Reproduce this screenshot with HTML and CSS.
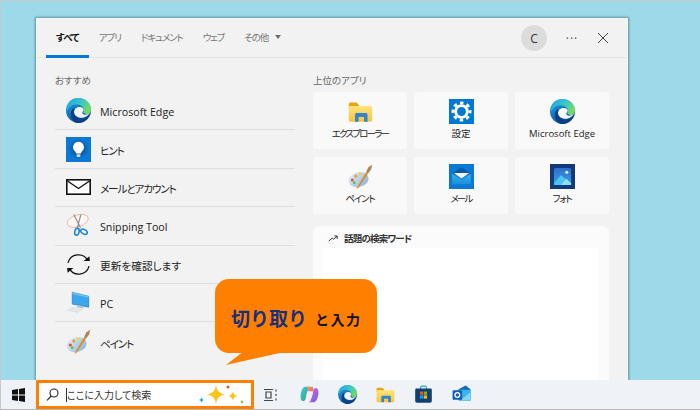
FILE: index.html
```html
<!DOCTYPE html>
<html lang="ja">
<head>
<meta charset="utf-8">
<title>検索</title>
<link rel="stylesheet" href="styles.css">
</head>
<body>
<svg class="sprite" aria-hidden="true">
  <defs>
    <linearGradient id="edgeBase" x1="0" y1="0" x2="0.6" y2="1"><stop offset="0" stop-color="#1fa2e4"/><stop offset="1" stop-color="#0a4f9e"/></linearGradient>
    <linearGradient id="edgeTop" x1="0" y1="0.2" x2="1" y2="0.6"><stop offset="0" stop-color="#22a7e8"/><stop offset="0.55" stop-color="#3cc8c4"/><stop offset="1" stop-color="#78dc58"/></linearGradient>
    <linearGradient id="folderBody" x1="0" y1="0" x2="0" y2="1"><stop offset="0" stop-color="#ffe37d"/><stop offset="1" stop-color="#fcc23a"/></linearGradient>
    <linearGradient id="mailBody" x1="0" y1="0" x2="0" y2="1"><stop offset="0" stop-color="#37b4ee"/><stop offset="1" stop-color="#1a8fdc"/></linearGradient>
    <linearGradient id="photo" x1="0" y1="0" x2="0" y2="1"><stop offset="0" stop-color="#2a6fc9"/><stop offset="1" stop-color="#3f9fe4"/></linearGradient>
    <linearGradient id="palette" x1="0" y1="0" x2="1" y2="1"><stop offset="0" stop-color="#eef3f7"/><stop offset="1" stop-color="#7fb0d8"/></linearGradient>
    <radialGradient id="hintGlow"><stop offset="0.55" stop-color="#0a5ea8"/><stop offset="1" stop-color="#0a78d4"/></radialGradient>
    <linearGradient id="copA" x1="0" y1="0" x2="1" y2="1"><stop offset="0" stop-color="#3cc4e6"/><stop offset="1" stop-color="#3aa868"/></linearGradient>
    <linearGradient id="copB" x1="0" y1="0" x2="1" y2="1"><stop offset="0" stop-color="#f7b23c"/><stop offset="1" stop-color="#ef5a8c"/></linearGradient>
    <linearGradient id="copC" x1="0" y1="0" x2="1" y2="1"><stop offset="0" stop-color="#e070c8"/><stop offset="1" stop-color="#6a5cf0"/></linearGradient>
    <mask id="edgeMask"><rect width="48" height="48" fill="#fff"/><path d="M47.5 25.5C45 31 38 33 34 31.5 30.5 30 31 27 33 25 35 22.5 33.5 18 27 17.500 20 17 15.500 22 15.500 27 15.500 32 20 37 28 38 36 39 44 34 47.500 25.500Z" fill="#000"/></mask>
    <symbol id="i-edge" viewBox="0 0 48 48">
      <g mask="url(#edgeMask)">
        <circle cx="24" cy="24" r="24" fill="url(#edgeBase)"/>
        <path d="M24 39C33 42 42 38 47 28 44 41 34 48 24 48 19 48 16 46 13 42 8 36 8 26 13 21 17 17 19 27 24 39Z" fill="#0b3f86"/>
        <path d="M4 10C9 3 16 0 24 0 38 0 48 10 48 22 48 28 43 31 38 31L33 28C36 22 33 15 25 13 16 11 8 13 4 22 2 27 1 19 4 10Z" fill="url(#edgeTop)"/>
      </g>
    </symbol>
    <symbol id="i-hint" viewBox="0 0 32 32">
      <rect width="32" height="32" fill="#0a78d4"/>
      <circle cx="16" cy="15" r="13" fill="url(#hintGlow)"/>
      <path d="M16 6a7 7 0 0 1 4.500 12.300c-1 1-1.200 2-1.200 2.700h-6.600c0-.7-.2-1.700-1.200-2.700A7 7 0 0 1 16 6Z" fill="#fff"/>
      <rect x="13.500" y="22" width="5" height="3.500" rx="1.200" fill="#d5d9de"/>
    </symbol>
    <symbol id="i-envelope" viewBox="0 0 25 16">
      <rect x="0.800" y="0.800" width="23.400" height="14.400" fill="#fff" stroke="#111" stroke-width="1.600"/>
      <path d="M1.500 2 12.500 9.500 23.500 2" fill="none" stroke="#111" stroke-width="1.400"/>
    </symbol>
    <symbol id="i-snip" viewBox="0 0 32 32">
      <ellipse cx="15" cy="10" rx="14" ry="7.500" transform="rotate(-18 15 10)" fill="#fdf6f5" stroke="#f0a8a2" stroke-width="1"/>
      <path d="M10 2 18.500 19M19 2 14.500 19" stroke="#8d8d8d" stroke-width="1.500" fill="none"/>
      <ellipse cx="14" cy="24" rx="2.800" ry="4.500" transform="rotate(12 14 24)" fill="none" stroke="#1b86d8" stroke-width="2"/>
      <ellipse cx="23" cy="24" rx="4.500" ry="2.800" transform="rotate(30 23 24)" fill="none" stroke="#1b86d8" stroke-width="2"/>
    </symbol>
    <symbol id="i-refresh" viewBox="0 0 32 32">
      <path d="M2.500 14A13.800 13.800 0 0 1 28 11" fill="none" stroke="#111" stroke-width="1.600"/>
      <path d="M29.500 18A13.800 13.800 0 0 1 4 21" fill="none" stroke="#111" stroke-width="1.600"/>
      <path d="M22.500 11.500H30.500L30 5.500Z" fill="#111"/>
      <path d="M9.500 20.500H1.500L2 26.500Z" fill="#111"/>
    </symbol>
    <symbol id="i-pc" viewBox="0 0 32 32">
      <path d="M8 3 29 8V22L8 18Z" fill="#3ba6ee" stroke="#1d72b8" stroke-width="0.800"/>
      <path d="M8 3 29 8V10L8 5Z" fill="#6cc3f5"/>
      <path d="M14 19 22 21V24L14 22Z" fill="#b9c3cc"/>
      <path d="M9 22 22 25 15 29 1 26Z" fill="#d6dade"/>
      <path d="M5 25 18 27.500M8 23.500 20 26" stroke="#fff" stroke-width="0.700"/>
    </symbol>
    <symbol id="i-paint" viewBox="0 0 32 32">
      <ellipse cx="13.500" cy="20" rx="13" ry="9.500" transform="rotate(-14 13.500 20)" fill="url(#palette)"/>
      <circle cx="5.500" cy="20.500" r="2" fill="#e8503c"/>
      <circle cx="10" cy="15.500" r="2" fill="#ed9a2a"/>
      <circle cx="15.500" cy="12.500" r="2" fill="#f4d23a"/>
      <circle cx="8" cy="24" r="1.800" fill="#6bbb48"/>
      <path d="M11 31 23 11 25.500 12.500 13 31Z" fill="#e08a22"/>
      <path d="M23 11 26 4 31 1 29.500 7 25.500 12.500Z" fill="#a9875a"/>
    </symbol>
    <symbol id="i-folder" viewBox="0 0 32 32">
      <path d="M1 6.500A2 2 0 0 1 3 4.500H11L14 8V12H1Z" fill="#e3a711"/>
      <path d="M1 11A2 2 0 0 1 3 9H29A2 2 0 0 1 31 11V27A2 2 0 0 1 29 29H3A2 2 0 0 1 1 27Z" fill="url(#folderBody)"/>
      <path d="M9 29V20A2 2 0 0 1 11 18H23A2 2 0 0 1 25 20V29H20.500V23H13.500V29Z" fill="#2f86d0"/>
    </symbol>
    <symbol id="i-gear" viewBox="0 0 32 32">
      <rect width="32" height="32" fill="#0078d4"/>
      <circle cx="16" cy="16" r="7.500" fill="none" stroke="#fff" stroke-width="3.600"/>
      <circle cx="16" cy="16" r="11" fill="none" stroke="#fff" stroke-width="3.600" stroke-dasharray="4.400 4.240" stroke-dashoffset="2.200"/>
    </symbol>
    <symbol id="i-mail" viewBox="0 0 32 32">
      <rect width="32" height="32" fill="#0a78d4"/>
      <path d="M16 4 28 12V14H4V12Z" fill="#0a5aa5"/>
      <path d="M4 12 16 20 28 12V26H4Z" fill="url(#mailBody)"/>
      <path d="M6 11.500H26L16 18.500Z" fill="#eef8ff"/>
    </symbol>
    <symbol id="i-photo" viewBox="0 0 32 32">
      <rect width="32" height="32" fill="#123a78"/>
      <rect x="5" y="5" width="22" height="22" rx="2" fill="url(#photo)"/>
      <circle cx="21.500" cy="10.500" r="2" fill="#dff3fd"/>
      <path d="M5 25 14 14 27 26V27H5Z" fill="#4bc4f0"/>
      <path d="M14 27 21 19 27 25V27Z" fill="#8fe0f7"/>
    </symbol>
    <symbol id="i-copilot" viewBox="0 0 32 32">
      <path d="M9 3H18C14 6 11 13 10 21 9.500 26 7 27 5 27 2 27 1 23 1 20 1 13 4 3 9 3Z" fill="url(#copA)"/>
      <path d="M23 29H14C18 26 21 19 22 11 22.500 6 25 5 27 5 30 5 31 9 31 12 31 19 28 29 23 29Z" fill="url(#copC)"/>
      <path d="M10 3H20C22 3 23 5 22.500 8L22 11 14 11C15 7 13 4 10 3Z" fill="url(#copB)"/>
      <path d="M15 11H22L18 26 C17 28 15 29 12 29 14 26 14 15 15 11Z" fill="#fdeef3"/>
    </symbol>
    <symbol id="i-store" viewBox="0 0 32 32">
      <path d="M11 8V5A3 3 0 0 1 14 2H18A3 3 0 0 1 21 5V8" fill="none" stroke="#2aa0dc" stroke-width="2"/>
      <path d="M2 8A2 2 0 0 1 4 6H28A2 2 0 0 1 30 8V27A3 3 0 0 1 27 30H5A3 3 0 0 1 2 27Z" fill="#123f73"/>
      <rect x="10" y="11" width="5.500" height="5.500" fill="#f25022"/>
      <rect x="16.500" y="11" width="5.500" height="5.500" fill="#7fba00"/>
      <rect x="10" y="17.500" width="5.500" height="5.500" fill="#00a4ef"/>
      <rect x="16.500" y="17.500" width="5.500" height="5.500" fill="#ffb900"/>
    </symbol>
    <symbol id="i-outlook" viewBox="0 0 32 32">
      <path d="M11 7 23 1 31 7V26H11Z" fill="#1a66b8"/>
      <path d="M11 8 31 8V26H14Z" fill="#39b4e8"/>
      <path d="M14 26 31 12V26Z" fill="#7fd6f4"/>
      <rect x="1" y="9" width="16" height="16" rx="2" fill="#0f5fb5"/>
      <circle cx="9" cy="17" r="4" fill="none" stroke="#fff" stroke-width="2.200"/>
    </symbol>
  </defs>
</svg>

<div class="screen">
  <div class="desktop">
    <section class="window">
      <header class="win-head">
        <nav class="tabs">
          <span class="tab tab-active">すべて</span>
          <span class="tab">アプリ</span>
          <span class="tab">ドキュメント</span>
          <span class="tab">ウェブ</span>
          <span class="tab">その他<i class="caret"></i></span>
        </nav>
        <div class="win-tools">
          <span class="avatar">C</span>
          <span class="more">···</span>
          <svg class="close" viewBox="0 0 10 10"><path d="M0 0 10 10M10 0 0 10"/></svg>
        </div>
      </header>
      <div class="win-body">
        <div class="col-left">
          <h2 class="sec-title">おすすめ</h2>
          <ul class="rows">
            <li class="row"><svg class="row-icon"><use href="#i-edge"/></svg><span>Microsoft Edge</span></li>
            <li class="row"><svg class="row-icon"><use href="#i-hint"/></svg><span class="kana">ヒント</span></li>
            <li class="row"><svg class="row-icon row-env"><use href="#i-envelope"/></svg><span class="kana">メールとアカウント</span></li>
            <li class="row"><svg class="row-icon"><use href="#i-snip"/></svg><span>Snipping Tool</span></li>
            <li class="row"><svg class="row-icon"><use href="#i-refresh"/></svg><span>更新を確認します</span></li>
            <li class="row"><svg class="row-icon"><use href="#i-pc"/></svg><span>PC</span></li>
            <li class="row"><svg class="row-icon"><use href="#i-paint"/></svg><span class="kana">ペイント</span></li>
          </ul>
        </div>
        <div class="col-right">
          <h2 class="sec-title">上位のアプリ</h2>
          <div class="cards">
            <div class="card"><svg class="card-icon"><use href="#i-folder"/></svg><span class="kana-tight">エクスプローラー</span></div>
            <div class="card"><svg class="card-icon"><use href="#i-gear"/></svg><span>設定</span></div>
            <div class="card"><svg class="card-icon"><use href="#i-edge"/></svg><span>Microsoft Edge</span></div>
            <div class="card"><svg class="card-icon"><use href="#i-paint"/></svg><span class="kana">ペイント</span></div>
            <div class="card"><svg class="card-icon"><use href="#i-mail"/></svg><span class="kana-tight">メール</span></div>
            <div class="card"><svg class="card-icon"><use href="#i-photo"/></svg><span class="kana">フォト</span></div>
          </div>
          <div class="trend">
            <div class="trend-head">
              <svg class="trend-icon" viewBox="0 0 12 8"><path d="M1 7 5 3.500 7 5 11 1M7.500 1H11V4.500"/></svg>
              <span>話題の検索ワード</span>
            </div>
            <div class="trend-body"></div>
          </div>
        </div>
      </div>
    </section>
  </div>

  <footer class="taskbar">
    <svg class="win-logo" viewBox="0 0 13 14"><path d="M0 2 6 1.100V6.500H0ZM7 1 13 0V6.500H7ZM0 7.500H6V12.900L0 12ZM7 7.500H13V14L7 13Z"/></svg>
    <div class="search">
      <svg class="search-icon" viewBox="0 0 13 13"><circle cx="8" cy="5" r="4"/><path d="M5.200 8 1 12.300"/></svg>
      <span class="search-text">ここに入力して検索</span>
      <svg class="sparkles" viewBox="0 0 48 22">
        <path d="M18 1C19 7 21 9 27 10.500 21 12 19 14 18 20 17 14 15 12 9 10.500 15 9 17 7 18 1Z" fill="#fcc419"/>
        <path d="M35 7C35.500 10 36.500 11 39.500 12 36.500 13 35.500 14 35 17 34.500 14 33.500 13 30.500 12 33.500 11 34.500 10 35 7Z" fill="#fcc419"/>
        <path d="M3.500 13C3.800 15 4.500 15.700 6.500 16 4.500 16.300 3.800 17 3.500 19 3.200 17 2.500 16.300 .5 16 2.500 15.700 3.200 15 3.500 13Z" fill="#1f9be8"/>
        <circle cx="30" cy="3" r="1.500" fill="#e8512f"/>
        <circle cx="44" cy="18" r="1.400" fill="#8ccb3f"/>
      </svg>
    </div>
    <div class="task-icons">
      <svg class="task-view" viewBox="0 0 14 14"><path d="M0 1.500H9M0 12.500H9M2 4H7V10H2ZM12 1.500V3.500M12 6V8M12 10.500V12.500"/></svg>
      <svg class="task-icon"><use href="#i-copilot"/></svg>
      <svg class="task-icon"><use href="#i-edge"/></svg>
      <svg class="task-icon"><use href="#i-folder"/></svg>
      <svg class="task-icon"><use href="#i-store"/></svg>
      <svg class="task-icon"><use href="#i-outlook"/></svg>
    </div>
  </footer>

  <div class="callout"><strong class="callout-key">切り取り</strong><span class="callout-rest">と入力</span></div>
</div>
</body>
</html>
```

FILE: styles.css
```css
* { box-sizing: border-box; margin: 0; padding: 0; }
html, body { width: 700px; height: 410px; overflow: hidden; }
body {
  margin: 0;
  font-family: "Open Sans", "Noto Sans CJK JP", sans-serif;
  font-feature-settings: "palt";
  color: #222;
}
.sprite { position: absolute; width: 0; height: 0; }

.screen {
  position: relative;
  width: 700px;
  height: 410px;
  display: flex;
  flex-direction: column;
  background: #9cdaea;
  border-top: 1px solid #c4c8c9;
  border-left: 1px solid #c4c8c9;
  border-bottom: 1px solid #b4b6b8;
}
.desktop { flex: 1; min-height: 0; padding: 17px 72px 0 35px; display: flex; }

.window {
  flex: 1;
  display: flex;
  flex-direction: column;
  background: #f2f2f2;
  border: 1px solid #fafafa;
  border-bottom: 0;
  box-shadow: 0 0 2px 1px rgba(30, 90, 110, .55);
  overflow: hidden;
}
.win-head {
  height: 39px;
  flex: none;
  display: flex;
  align-items: stretch;
  justify-content: space-between;
  padding-left: 9px;
  border-bottom: 1px solid #e4e4e4;
}
.tabs { display: flex; }
.tab {
  display: flex;
  align-items: center;
  padding: 0 10px;
  font-size: 9.500px;
  letter-spacing: -1.100px;
  color: #767676;
  border-bottom: 3px solid transparent;
  margin-bottom: -1px;
}
.tab-active { color: #111; font-weight: 700; border-bottom-color: #0078d4; letter-spacing: -.8px; }
.caret {
  margin-left: 7px;
  border-left: 3.500px solid transparent;
  border-right: 3.500px solid transparent;
  border-top: 4px solid #6b6b6b;
}
.win-tools { display: flex; align-items: center; padding-right: 19px; }
.avatar {
  width: 26px;
  height: 26px;
  border-radius: 50%;
  background: #dcdcdc;
  display: flex;
  align-items: center;
  justify-content: center;
  font-size: 12px;
  color: #333;
}
.more { margin-left: 18px; font-size: 12px; letter-spacing: 1px; color: #555; width: 14px; text-align: center; }
.close { margin-left: 19px; width: 10px; height: 10px; stroke: #444; stroke-width: 1; fill: none; }

.win-body { flex: 1; min-height: 0; display: flex; gap: 18px; padding: 16px 18px 0; }
.col-left { width: 240px; flex: none; }
.col-right { width: 296px; flex: none; display: flex; flex-direction: column; }
.sec-title { font-size: 9.500px; line-height: 14px; font-weight: 400; color: #666; margin-bottom: 4px; }
.kana { letter-spacing: -1.200px; }
.kana-tight { letter-spacing: -1.800px; }

.rows { list-style: none; margin-top: 1px; }
.row {
  height: 38.400px;
  display: flex;
  align-items: center;
  gap: 9px;
  padding-left: 11px;
  border-bottom: 1px solid #dedede;
  font-size: 10.700px;
  color: #222;
}
.row span { padding-top: 3px; }
.row:last-child { border-bottom: 0; }
.row-icon { width: 25px; height: 25px; flex: none; }
.row-env { height: 16px; }

.cards { display: grid; grid-template-columns: repeat(3, 94px); grid-auto-rows: 57px; gap: 8px; column-gap: 7px; }
.card {
  background: #f9f9f9;
  border-radius: 3px;
  display: flex;
  flex-direction: column;
  align-items: center;
  padding-top: 7px;
  gap: 3px;
  font-size: 9.500px;
  line-height: 14px;
  color: #222;
}
.card-icon { width: 25px; height: 25px; flex: none; }

.trend {
  flex: 1;
  min-height: 0;
  margin-top: 12px;
  background: #fbfbfb;
  border-radius: 6px 6px 0 0;
  padding: 0 11px 0 10px;
  display: flex;
  flex-direction: column;
}
.trend-head {
  height: 22px;
  flex: none;
  display: flex;
  align-items: center;
  gap: 6px;
  padding-left: 5px;
  padding-top: 2px;
  font-size: 9.500px;
  font-weight: 700;
  letter-spacing: -.8px;
  color: #333;
}
.trend-icon { width: 10px; height: 7px; fill: none; stroke: #333; stroke-width: 1.200; }
.trend-body { flex: 1; background: #fff; }

.taskbar {
  height: 29px;
  flex: none;
  display: flex;
  align-items: center;
  background: #eff2f7;
}
.win-logo { width: 13px; height: 14px; margin-left: 11px; fill: #111; flex: none; }
.search {
  width: 218px;
  height: 29px;
  margin-left: 11px;
  flex: none;
  display: flex;
  align-items: center;
  background: #fff;
  border: 3px solid #ff8000;
  padding-left: 7px;
}
.search-icon { width: 13px; height: 13px; flex: none; fill: none; stroke: #222; stroke-width: 1.100; }
.search-text {
  margin-left: 7px;
  border-left: 1px solid #333;
  font-size: 10px;
  line-height: 14px;
  color: #333;
}
.sparkles { width: 48px; height: 22px; margin-left: auto; margin-right: 5px; flex: none; }

.task-icons { display: flex; align-items: center; }
.task-view { width: 14px; height: 14px; margin-left: 10px; fill: none; stroke: #444; stroke-width: 1.200; flex: none; }
.task-icon { width: 19px; height: 19px; margin-left: 19px; flex: none; }
.task-view + .task-icon { margin-left: 22px; }

.callout {
  position: absolute;
  left: 214px;
  top: 278px;
  width: 162px;
  height: 74px;
  background: #ff8000;
  border-radius: 14px;
  display: flex;
  align-items: center;
  gap: 8px;
  padding: 3px 0 0 16px;
  font-feature-settings: normal;
}
.callout::after {
  content: "";
  position: absolute;
  left: 11px;
  top: 73px;
  width: 58px;
  height: 13px;
  background: #ff8000;
  clip-path: polygon(0 100%, 29% 0, 100% 0);
}
.callout-key { font-size: 19px; font-weight: 700; color: #17307e; }
.callout-rest { font-size: 14px; font-weight: 700; color: #111; letter-spacing: 1.500px; padding-top: 2px; }
```
